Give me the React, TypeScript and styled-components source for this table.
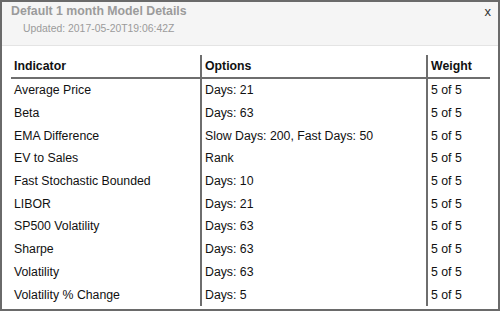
import styled, { createGlobalStyle } from "styled-components"

const GlobalStyle = createGlobalStyle`
  html, body {
    margin: 0;
    padding: 0;
    background: #fff;
  }
  body {
    font-family: "Liberation Sans", Arial, sans-serif;
  }
`

const rows = [
  { name: "Average Price", options: "Days: 21", weight: "5 of 5" },
  { name: "Beta", options: "Days: 63", weight: "5 of 5" },
  { name: "EMA Difference", options: "Slow Days: 200, Fast Days: 50", weight: "5 of 5" },
  { name: "EV to Sales", options: "Rank", weight: "5 of 5" },
  { name: "Fast Stochastic Bounded", options: "Days: 10", weight: "5 of 5" },
  { name: "LIBOR", options: "Days: 21", weight: "5 of 5" },
  { name: "SP500 Volatility", options: "Days: 63", weight: "5 of 5" },
  { name: "Sharpe", options: "Days: 63", weight: "5 of 5" },
  { name: "Volatility", options: "Days: 63", weight: "5 of 5" },
  { name: "Volatility % Change", options: "Days: 5", weight: "5 of 5" },
]

const App = () => {
  return (
    <>
      <GlobalStyle />
      <Modal>
        <Header>
          <TitleRow>
            <Title>Default 1 month Model Details</Title>
            <Close>x</Close>
          </TitleRow>
          <Updated>Updated: 2017-05-20T19:06:42Z</Updated>
        </Header>
        <Body>
          <Table>
            <colgroup>
              <col style={{ width: 190 }} />
              <col style={{ width: 226 }} />
              <col style={{ width: 63 }} />
            </colgroup>
            <thead>
              <tr>
                <Th>Indicator</Th>
                <Th $divider>Options</Th>
                <Th $divider>Weight</Th>
              </tr>
            </thead>
            <tbody>
              {rows.map((r) => (
                <tr key={r.name}>
                  <Td>{r.name}</Td>
                  <Td $divider>{r.options}</Td>
                  <Td $divider>{r.weight}</Td>
                </tr>
              ))}
            </tbody>
          </Table>
        </Body>
      </Modal>
    </>
  )
}

export default App

/* STYLED COMPONENTS */
const Modal = styled.div`
  box-sizing: border-box;
  width: 500px;
  height: 311px;
  border: 2px solid #6a6a6a;
  background: #fff;
  overflow: hidden;
`

const Header = styled.div`
  box-sizing: border-box;
  height: 44px;
  background: #f5f5f5;
  border-bottom: 1px solid #e4e4e4;
  padding: 2px 0 0 9px;
`

const TitleRow = styled.div`
  display: flex;
  justify-content: space-between;
  align-items: flex-start;
`

const Title = styled.div`
  font-size: 12.3px;
  font-weight: bold;
  line-height: 15px;
  color: #9b9b9b;
`

const Close = styled.div`
  font-size: 13px;
  line-height: 15px;
  color: #333;
  padding: 0 7px 0 0;
`

const Updated = styled.div`
  font-size: 10.4px;
  line-height: 13px;
  color: #9b9b9b;
  margin: 3px 0 0 12px;
`

const Body = styled.div`
  padding: 9px 0 0 9px;
`

const Table = styled.table`
  width: 479px;
  border-collapse: collapse;
  table-layout: fixed;
  font-size: 12.3px;
  color: #111;
`

const Th = styled.th<{ $divider?: boolean }>`
  text-align: left;
  font-weight: bold;
  height: 22px;
  padding: 0 3px;
  vertical-align: middle;
  border-bottom: 2px solid #6e6e6e;
  border-left: ${(p) => (p.$divider ? "2px solid #6e6e6e" : "none")};
`

const Td = styled.td<{ $divider?: boolean }>`
  height: 22.7px;
  padding: 0 3px;
  vertical-align: middle;
  white-space: nowrap;
  border-left: ${(p) => (p.$divider ? "2px solid #6e6e6e" : "none")};
`
